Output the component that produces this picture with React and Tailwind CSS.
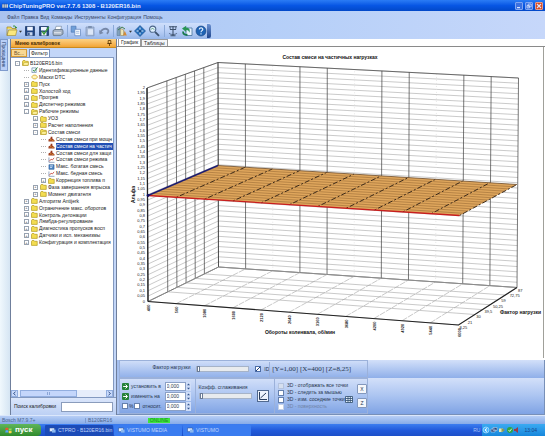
import React, { useState } from "react";

// data ---------------------------------------------------------------------------------------------------------
const TREE = [
  { level: 0, icon: "open", box: "-", label: "B120ER16.bin" },
  { level: 1, icon: "edit", label: "Идентификационные данные" },
  { level: 1, icon: "mask", label: "Маски DTC" },
  { level: 1, icon: "folder", box: "+", label: "Пуск" },
  { level: 1, icon: "folder", box: "+", label: "Холостой ход" },
  { level: 1, icon: "folder", box: "+", label: "Прогрев" },
  { level: 1, icon: "folder", box: "+", label: "Диспетчер режимов" },
  { level: 1, icon: "open", box: "-", label: "Рабочие режимы" },
  { level: 2, icon: "folder", box: "+", label: "УОЗ" },
  { level: 2, icon: "folder", box: "+", label: "Расчет наполнения" },
  { level: 2, icon: "open", box: "-", label: "Состав смеси" },
  { level: 3, icon: "map", label: "Состав смеси при мощн" },
  { level: 3, icon: "map", label: "Состав смеси на частич" },
  { level: 3, icon: "map", label: "Состав смеси для защи" },
  { level: 3, icon: "curve", label: "Состав смеси режима" },
  { level: 3, icon: "value", label: "Макс. богатая смесь" },
  { level: 3, icon: "curve", label: "Макс. бедная смесь" },
  { level: 3, icon: "folder", box: "+", label: "Коррекция топлива п" },
  { level: 2, icon: "folder", box: "+", label: "Фаза завершения впрыска" },
  { level: 2, icon: "folder", box: "+", label: "Момент двигателя" },
  { level: 1, icon: "folder", box: "+", label: "Алгоритм Antijerk" },
  { level: 1, icon: "folder", box: "+", label: "Ограничение макс. оборотов" },
  { level: 1, icon: "folder", box: "+", label: "Контроль детонации" },
  { level: 1, icon: "folder", box: "+", label: "Лямбда-регулирование" },
  { level: 1, icon: "folder", box: "+", label: "Диагностика пропусков восп" },
  { level: 1, icon: "folder", box: "+", label: "Датчики и исп. механизмы" },
  { level: 1, icon: "folder", box: "+", label: "Конфигурация и комплектация" },
];

const INDENT = ["pl-1", "pl-[13px]", "pl-[22px]", "pl-[30px]"];
const MENU = ["Файл", "Правка", "Вид", "Команды", "Инструменты", "Конфигурация", "Помощь"];
const RPM = ["400", "560", "1080", "1600", "2120", "2640", "3160", "3680", "4200", "4920", "5440", "6000"];
const LOADS = ["8,25", "21", "30", "39,5", "50,25", "59", "72,75", "87"];

// icons --------------------------------------------------------------------------------------------------------
function TreeIcon({ type }) {
  if (type === "folder" || type === "open") {
    return (
      <svg viewBox="0 0 8 7" className="h-[6px] w-[7px] shrink-0">
        <path d="M.5 1.5 1.2.6h2.2l.7.9h3.1v4.8H.5z" fill="#f3dc50" stroke="#a88d12" strokeWidth=".7" />
        {type === "open" && <path d="M1 6.2 2.4 3h5.3L6.8 6.2z" fill="#fff3a0" stroke="#a88d12" strokeWidth=".5" />}
      </svg>
    );
  } else if (type === "edit") {
    return (
      <svg viewBox="0 0 8 7" className="h-[6px] w-[7px] shrink-0">
        <path d="M1 1h5v5.5H1z" fill="#eef6ff" stroke="#557799" strokeWidth=".7" />
        <path d="m2.5 3.5 1.3 1.6L7.5.5" fill="none" stroke="#28852c" strokeWidth="1.1" />
      </svg>
    );
  } else if (type === "mask") {
    return (
      <svg viewBox="0 0 8 7" className="h-[6px] w-[7px] shrink-0">
        <path d="m.6 3.5 2-2.2h3l2 2.2-2 2.2h-3z" fill="#fff6c0" stroke="#d5a624" strokeWidth=".9" />
      </svg>
    );
  } else if (type === "map") {
    return (
      <svg viewBox="0 0 8 7" className="h-[6px] w-[7px] shrink-0">
        <path d="M.5 6.5V4L3 2.6V1h2v2l2.5 2v1.5z" fill="#9c3b1d" />
        <path d="m2 5 1.5-1L5 5.5 6.5 5" fill="none" stroke="#f0b040" strokeWidth=".8" />
      </svg>
    );
  } else if (type === "value") {
    return (
      <svg viewBox="0 0 8 7" className="h-[6px] w-[7px] shrink-0">
        <path d="M1 .8h6v5.4H1z" fill="#4d86c6" stroke="#24558f" strokeWidth=".6" />
        <path d="M2.3 2.2h3.4M2.3 4h2.4" stroke="#fff" strokeWidth=".8" />
      </svg>
    );
  } else {
    return (
      <svg viewBox="0 0 8 7" className="h-[6px] w-[7px] shrink-0">
        <path d="M1 .5v5.7h6.5" fill="none" stroke="#56719a" strokeWidth=".7" />
        <path d="m1.5 5 2-2.5 1.5 1L7 1" fill="none" stroke="#c0392b" strokeWidth=".9" />
      </svg>
    );
  }
}

const TOOL_ICONS = {
  Открыть: (
    <>
      <path d="M1 4V2h4l1 1.5h4V5" fill="#f4dc62" stroke="#9d8524" strokeWidth=".7" />
      <path d="M1 10.5 2.6 5H11l-1.4 5.5z" fill="#fae77d" stroke="#9d8524" strokeWidth=".6" />
      <path d="M1 4v6.5" stroke="#9d8524" strokeWidth=".7" />
      <path d="M7 1.2c1.5-.8 3 0 3 1.8l1-.8M10 3 8.8 2" fill="none" stroke="#2b8a30" strokeWidth=".9" />
    </>
  ),
  Сохранить: (
    <>
      <path d="M1.5 1.5h9v9h-9z" fill="#1e4382" stroke="#15305f" strokeWidth=".7" />
      <path d="M3.2 1.8h5.6v3.7H3.2z" fill="#eef4fe" />
      <path d="M3.5 7.2h5v3.3h-5z" fill="#c7d6ee" />
      <path d="M4.2 7.8h1.4v2.4H4.2z" fill="#1e4382" />
    </>
  ),
  Проверить: (
    <>
      <path d="M1.5 1.5h9v9h-9z" fill="#24497f" stroke="#15305f" strokeWidth=".7" />
      <path d="M3 2h5.8v3.5H3zM3.5 7h5v3.5h-5z" fill="#f0f5ff" />
      <path d="M4 6.2 6 9l4.8-7" fill="none" stroke="#39973b" strokeWidth="1.4" />
    </>
  ),
  Печать: (
    <>
      <path d="M4 1.3h5.5L8.7 5H3z" fill="#fff" stroke="#667a94" strokeWidth=".6" />
      <path d="m1 5.5 2-1h7.5L11 6v3L8.5 10.6H1.5L1 9z" fill="#a8b5c6" stroke="#566779" strokeWidth=".7" />
      <path d="M2 7.8h7" stroke="#fff" strokeWidth=".8" />
    </>
  ),
  Копировать: (
    <>
      <path d="M1.2 1.2H6v6H1.2z" fill="#6f9fd9" stroke="#4f79b5" strokeWidth=".7" />
      <path d="M4.8 4.3h5.7v6.4H4.8z" fill="#f8fbff" stroke="#5d83bb" strokeWidth=".7" />
      <path d="M6 6.4h3.3M6 8.2h3.3" stroke="#7a9aca" strokeWidth=".6" />
    </>
  ),
  Вставить: (
    <>
      <path d="M2 2h8v8.8H2z" fill="#a9bbd8" stroke="#7d93b7" strokeWidth=".7" />
      <path d="M4.2 1h3.6v2H4.2z" fill="#7a8fae" />
      <path d="M4 4.2h5v5.5H4z" fill="#dce7f8" />
    </>
  ),
  Отменить: (
    <>
      <path d="M2.2 8C3.2 4 7.6 2.8 9.8 4.6c1.2 1.3.4 3.2-1 4.2" fill="none" stroke="#7688a8" strokeWidth="1.8" />
      <path d="m1.2 5 .4 4.6 4-1.6z" fill="#7688a8" />
    </>
  ),
  Калибровки: (
    <>
      <path d="M1 10.5V3l3-1.8V10.5z" fill="#82a2bd" stroke="#5a7591" strokeWidth=".5" />
      <path d="M4.6 10.5V3.6l3 1.2v5.7z" fill="#eee8bc" stroke="#907b3a" strokeWidth=".5" />
      <path d="m7 10.5 1.8-4.8 2 4.8z" fill="#d48a35" />
      <path d="m2 5 4-3 3 2" fill="none" stroke="#467f4c" />
    </>
  ),
  Навигация: (
    <>
      <path d="m6 .5 5.5 5.5L6 11.5.5 6z" fill="#2670bd" stroke="#174b88" strokeWidth=".6" />
      <path d="M6 2.6v6.8M2.6 6h6.8" stroke="#dcefff" />
      <circle cx="6" cy="6" r="1.5" fill="#174b88" />
    </>
  ),
  Поиск: (
    <>
      <circle cx="4.7" cy="4.2" r="3.1" fill="#dff0ff" stroke="#4a6588" strokeWidth="1.1" />
      <path d="m7 6.8 4 4" stroke="#3f5573" strokeWidth="1.9" />
      <path d="M3 4.7 4.5 3l1.7 1.8" fill="none" stroke="#3f8957" strokeWidth=".7" />
    </>
  ),
  Связь: (
    <>
      <path d="M2 1.8h8M3 4.5h6M6 1v10M3.5 10.8h5" fill="none" stroke="#3e526d" strokeWidth="1.1" />
      <path d="M3.2 1.8v2.5M8.8 1.8v2.5M2 8c1 2 7 2 8 0" fill="none" stroke="#3e526d" strokeWidth=".8" />
    </>
  ),
  Обновить: (
    <>
      <path d="M5 3h6v7.5H5z" fill="#e8f3ff" stroke="#44719c" strokeWidth=".8" />
      <path d="M1 3.6 5.2.8v2c4 0 3.6 2.4 3.4 5C7.6 5.6 7 5 5.2 5v1.9z" fill="#299556" />
      <path d="M2 6.5C2 9 4 10.3 6.5 9.6" fill="none" stroke="#18794c" strokeWidth="1.8" />
    </>
  ),
  Справка: (
    <>
      <circle cx="6" cy="6" r="5" fill="#1e63b5" stroke="#12407a" strokeWidth=".6" />
      <path d="M4.3 4.5c0-2.4 3.8-2 3.5 0C7.5 5.6 6 5.7 6 7.2M6 8.3v1.1" fill="none" stroke="#e9f5ff" strokeWidth="1.1" />
    </>
  ),
};

function ToolButton({ name }) {
  return (
    <button type="button" aria-label={name} className="h-3 w-3 shrink-0">
      <svg viewBox="0 0 12 12" className="size-full">
        {TOOL_ICONS[name]}
      </svg>
    </button>
  );
}

function DropArrow() {
  return (
    <svg viewBox="0 0 4 4" className="ml-[1px] size-[3px] shrink-0">
      <path d="M0 1h4L2 3.5z" fill="#333" />
    </svg>
  );
}

// top bars -----------------------------------------------------------------------------------------------------
function TitleBar() {
  return (
    <header className="flex h-[11px] items-center bg-linear-to-b from-[#2b7cf5] via-[#0756e4] to-[#0248c8] pr-[2px] pl-[2px]">
      <svg viewBox="0 0 7 6" className="mr-[1px] h-[6px] w-[6px]">
        <path d="M0 1h7v4H0z" fill="#c9d6e6" />
        <path d="M1 0v6M3 0v6M5 0v6" stroke="#384a66" strokeWidth=".6" />
      </svg>
      <h1 className="flex-1 font-['Liberation_Sans'] text-[6px] leading-none font-bold whitespace-nowrap text-[#e4eeff]">
        ChipTuningPRO ver.7.7.6 1308 - B120ER16.bin
      </h1>
      <div className="flex gap-[2px] text-[#dbe6ff]">
        <button type="button" aria-label="Свернуть" className="size-2 rounded-[1px] border border-[#7fa5f2] bg-[#3c70e0]">
          <svg viewBox="0 0 6 6"><path d="M1 4.6h3" stroke="currentColor" strokeWidth="1.2" /></svg>
        </button>
        <button type="button" aria-label="Развернуть" className="size-2 rounded-[1px] border border-[#7fa5f2] bg-[#3c70e0]">
          <svg viewBox="0 0 6 6"><path d="M2.2 1h3v2.8h-3zM1 2.5h2.5v2.4H1z" fill="none" stroke="currentColor" strokeWidth=".7" /></svg>
        </button>
        <button type="button" aria-label="Закрыть" className="size-2 rounded-[1px] border border-[#e89a85] bg-[#d64a24]">
          <svg viewBox="0 0 6 6"><path d="m1 1 4 4m0-4L1 5" stroke="currentColor" strokeWidth="1.1" /></svg>
        </button>
      </div>
    </header>
  );
}

function Toolbar() {
  return (
    <div className="bg-linear-to-r from-[#a9c3f0] via-[#b5cff8] to-[#c6d7fa]">
      <nav className="flex h-3 items-center gap-[2px] pt-[1px] pl-[7px] text-[5px] text-[#34435f]">
        {MENU.map((item) => (
          <button type="button" key={item}>{item}</button>
        ))}
      </nav>
      <div className="flex h-4 w-[211px] items-center rounded-r-[2px] bg-linear-to-b from-[#cfdffb] via-[#b9cff6] to-[#97b6e8] pl-[6px]">
        <ToolButton name="Открыть" />
        <DropArrow />
        <div className="ml-[2px] flex gap-[2px]">
          <ToolButton name="Сохранить" />
          <ToolButton name="Проверить" />
          <ToolButton name="Печать" />
        </div>
        <div className="ml-[3px] flex gap-[2px] border-l border-[#8ba9d8] pl-[2px]">
          <ToolButton name="Копировать" />
          <ToolButton name="Вставить" />
          <ToolButton name="Отменить" />
        </div>
        <div className="ml-[3px] flex items-center border-l border-[#8ba9d8] pl-[2px]">
          <ToolButton name="Калибровки" />
          <DropArrow />
        </div>
        <div className="ml-[2px] flex gap-[2px]">
          <ToolButton name="Навигация" />
          <ToolButton name="Поиск" />
        </div>
        <div className="ml-1 flex gap-[2px] border-l border-[#8ba9d8] pl-[2px]">
          <ToolButton name="Связь" />
          <ToolButton name="Обновить" />
          <ToolButton name="Справка" />
        </div>
        <div className="ml-auto h-[14px] w-1 rounded-r-[2px] bg-linear-to-b from-[#6d93d3] to-[#20478f]" />
      </div>
    </div>
  );
}

// left panel ---------------------------------------------------------------------------------------------------
function TreeRow({ node, selected, onSelect }) {
  return (
    <li className={`flex min-h-0 items-center overflow-hidden ${INDENT[node.level]}`}>
      {node.box ? (
        <span className="flex size-[5px] shrink-0 items-center justify-center border border-[#98a2b0] text-[4px] leading-none text-[#333]">
          {node.box}
        </span>
      ) : (
        <span className="w-[5px] shrink-0 border-t border-dotted border-[#b0b0b0]" />
      )}
      <span className="ml-[2px] flex shrink-0">
        <TreeIcon type={node.icon} />
      </span>
      <button
        type="button"
        onClick={onSelect}
        className={`ml-[1px] h-full text-left text-[5px] leading-[7px] whitespace-nowrap ${
          selected ? "flex-1 bg-[#2350b4] text-white" : "text-[#1c1c1c]"
        }`}
      >
        {node.label}
      </button>
    </li>
  );
}

function CalibrationPanel() {
  const [selected, setSelected] = useState(12);

  return (
    <aside className="flex w-[107px] shrink-0 flex-col border-x border-[#6f7f9c] bg-[#c3d6f8]">
      <div className="flex h-[9px] items-center justify-between border-b border-[#c98a20] bg-linear-to-b from-[#fcd284] to-[#f2a431] px-1">
        <h2 className="text-[5px] leading-none font-bold text-[#4a2c00]">Меню калибровок</h2>
        <svg viewBox="0 0 5 6" className="h-[6px] w-[5px]">
          <path d="M1.2.5h2.6v3H1.2zM.3 3.5h4.4M2.5 3.5V6" fill="none" stroke="#5b3500" strokeWidth=".8" />
        </svg>
      </div>
      <div className="flex h-[9px] items-end text-[5px] leading-none">
        <button type="button" className="h-2 w-4 border border-[#d69b35] bg-[#f9d893] text-[#6b512a]">Вс...</button>
        <button type="button" className="ml-[2px] h-2 border border-b-0 border-[#7890bb] bg-white px-[1px]">Фильтр</button>
      </div>
      <div className="mr-[2px] flex flex-1 flex-col justify-between border-t border-r border-[#8399c0] bg-white pt-[2px]">
        <ul className="grid h-[186px] auto-rows-fr">
          {TREE.map((node, index) => (
            <TreeRow key={node.label} node={node} selected={index === selected} onSelect={() => setSelected(index)} />
          ))}
        </ul>
        <div className="flex h-[7px] items-center justify-between bg-[#e6edfb] text-[#36558c]">
          <button type="button" aria-label="Влево" className="size-[7px] border border-[#92aedf] bg-[#c8d9fa]">
            <svg viewBox="0 0 5 5"><path d="M3.5.8 1.5 2.5l2 1.7" fill="none" stroke="currentColor" /></svg>
          </button>
          <div className="mr-auto ml-[2px] flex h-[7px] w-[57px] items-center justify-center border border-[#92aedf] bg-[#c4d6fb]">
            <span className="h-[3px] w-[3px] border-x border-[#8aa5d6]" />
          </div>
          <button type="button" aria-label="Вправо" className="size-[7px] border border-[#92aedf] bg-[#c8d9fa]">
            <svg viewBox="0 0 5 5"><path d="m1.5.8 2 1.7-2 1.7" fill="none" stroke="currentColor" /></svg>
          </button>
        </div>
      </div>
      <div className="flex h-[18px] items-center justify-between border-t border-[#8399c0] bg-linear-to-b from-[#dbe6fb] to-[#bcd0f4] pr-[3px] pl-[3px] text-[5px]">
        <label htmlFor="search" className="whitespace-nowrap">Поиск калибровки</label>
        <input id="search" className="h-[10px] w-[52px] border border-[#8a9cbc] bg-white px-[2px]" />
      </div>
    </aside>
  );
}

// chart --------------------------------------------------------------------------------------------------------
const lerp = (a, b, t) => a + (b - a) * t;
const along = (p, q, t) => [lerp(p[0], q[0], t), lerp(p[1], q[1], t)];

// corners of the box: front-left, back-left, back-right, front-right
const TOP = [[147, 88], [218, 62.5], [518.5, 78]];
const FLOOR = [[148, 301.5], [218.5, 267], [517, 287.5], [458.5, 325]];
const PLANE = [[148, 195.5], [218, 165.5], [517, 184.5], [459.5, 215.5]];
const DEPTH = [0, 0.28, 0.41, 0.54, 0.67, 0.8, 1];

function Line({ from, to, ...rest }) {
  return <line x1={from[0]} y1={from[1]} x2={to[0]} y2={to[1]} {...rest} />;
}

function Chart() {
  const levels = Array.from({ length: 41 }, (_, i) => i);
  const columns = Array.from({ length: 12 }, (_, i) => i / 11);

  return (
    <svg
      viewBox="118 47 425 311"
      preserveAspectRatio="none"
      className="block w-full font-['Liberation_Sans']"
      role="img"
      aria-label="Состав смеси на частичных нагрузках"
    >
      {/* walls */}
      <g stroke="#a6a6a6" strokeWidth=".6" fill="none">
        {levels.map((i) => {
          const points = [0, 1, 2].map((c) => along(FLOOR[c], TOP[c], i / 40).join(",")).join(" ");
          return <polyline key={i} points={points} />;
        })}
      </g>
      <g stroke="#3d3d3d" strokeWidth=".7">
        {DEPTH.map((t) => (
          <Line key={t} from={along(FLOOR[0], FLOOR[1], t)} to={along(TOP[0], TOP[1], t)} />
        ))}
        {columns.map((t, i) =>
          [2, 5, 8].includes(i) ? (
            <Line key={t} from={along(FLOOR[1], FLOOR[2], t)} to={along(TOP[1], TOP[2], t)} stroke="#dedede" strokeDasharray="1 2" />
          ) : (
            <Line key={t} from={along(FLOOR[1], FLOOR[2], t)} to={along(TOP[1], TOP[2], t)} />
          )
        )}
        <polyline points={TOP.join(" ")} fill="none" />
        <polyline points={FLOOR.slice(0, 3).join(" ")} fill="none" />
      </g>

      {/* floor */}
      <g stroke="#a5a5a5" strokeWidth=".6">
        {columns.map((t) => (
          <Line key={t} from={along(FLOOR[0], FLOOR[3], t)} to={along(FLOOR[1], FLOOR[2], t)} strokeDasharray="6 1" />
        ))}
        {DEPTH.map((t) => (
          <Line key={t} from={along(FLOOR[0], FLOOR[1], t)} to={along(FLOOR[3], FLOOR[2], t)} />
        ))}
      </g>
      <polyline points={[FLOOR[0], FLOOR[3], FLOOR[2]].join(" ")} fill="none" stroke="#222" strokeWidth="1.1" />
      <Line from={TOP[0]} to={FLOOR[0]} stroke="#222" strokeWidth="1.3" />

      {/* surface */}
      <polygon points={PLANE.join(" ")} fill="#dfa65c" />
      <g stroke="#9a6b36" strokeWidth=".6">
        {Array.from({ length: 13 }, (_, i) => (i + 1) / 14).map((t) => (
          <Line key={t} from={along(PLANE[0], PLANE[1], t)} to={along(PLANE[3], PLANE[2], t)} />
        ))}
      </g>
      {columns.slice(1).map((t) => (
        <Line
          key={t}
          from={along(PLANE[0], PLANE[3], t)}
          to={along(PLANE[1], PLANE[2], t)}
          stroke="#2b1d12"
          strokeWidth=".9"
          strokeDasharray="2 2 5 2"
        />
      ))}
      <Line from={PLANE[1]} to={PLANE[2]} stroke="#6b4a2a" strokeWidth=".8" />
      <Line from={PLANE[0]} to={PLANE[3]} stroke="#c81e1e" strokeWidth="1.3" />
      <Line from={PLANE[0]} to={PLANE[1]} stroke="#1c1c70" strokeWidth="1.4" />
      <circle cx="148" cy="195.5" r="1.4" fill="#111166" />

      {/* labels */}
      <g fontSize="4" fill="#222" textAnchor="end">
        {levels.map((i) => (
          <text key={i} x="145" y={along(FLOOR[0], TOP[0], i / 40)[1] + 1}>
            {String(i / 20).replace(".", ",")}
          </text>
        ))}
        {RPM.map((rpm, i) => {
          const [x, y] = along(FLOOR[0], FLOOR[3], i / 11);
          return (
            <text key={rpm} transform={`translate(${x + 2} ${y + 3}) rotate(-90)`} fontWeight="bold">
              {rpm}
            </text>
          );
        })}
      </g>
      <g fontSize="4" fill="#222">
        {LOADS.map((load, i) => {
          const [x, y] = along(FLOOR[3], FLOOR[2], i / 7);
          return <text key={load} x={x + 1} y={y + 4}>{load}</text>;
        })}
      </g>
      <g fontSize="5" fontWeight="bold" fill="#111">
        <text x="330" y="59" textAnchor="middle">Состав смеси на частичных нагрузках</text>
        <text x="300" y="334" textAnchor="middle">Обороты коленвала, об/мин</text>
        <text x="500" y="314">Фактор нагрузки</text>
        <text transform="translate(135 203) rotate(-90)">Альфа</text>
      </g>
    </svg>
  );
}

// controls under the chart -------------------------------------------------------------------------------------
function NumberRow({ id, label, children }) {
  return (
    <div className="flex h-[10px] items-center">
      {children}
      <label htmlFor={id} className="ml-[2px] flex-1 whitespace-nowrap">{label}</label>
      <input id={id} defaultValue="0,000" className="h-[9px] w-[21px] shrink-0 border border-[#8ba0c6] bg-white px-[1px] text-[5px]" />
      <svg viewBox="0 0 5 9" className="h-[9px] w-[5px] shrink-0 bg-[#cfddf8]">
        <path d="M1 3.3 2.5 1.5 4 3.3zM1 5.7l1.5 1.8L4 5.7z" fill="#34568f" />
      </svg>
    </div>
  );
}

function GreenArrow() {
  return (
    <svg viewBox="0 0 7 7" className="size-[7px] shrink-0">
      <rect width="7" height="7" rx="1" fill="#26823a" />
      <path d="M1.2 3.5h4M3.5 1.5l2 2-2 2" fill="none" stroke="#fff" />
    </svg>
  );
}

function Tick({ id, label, checked, disabled }) {
  return (
    <div className={`flex h-[7px] items-center gap-[3px] ${disabled ? "text-[#6f83a8]" : "text-[#27364f]"}`}>
      <input
        id={id}
        type="checkbox"
        defaultChecked={checked}
        disabled={disabled}
        className="size-[6px] shrink-0 appearance-none border border-[#6580ad] bg-white checked:border-[#b4c3de] checked:bg-[#d5dfef] disabled:border-[#c4d1e8]"
      />
      <label htmlFor={id} className="whitespace-nowrap">{label}</label>
    </div>
  );
}

function Slider({ label }) {
  return (
    <input
      type="range"
      aria-label={label}
      defaultValue="0"
      className="h-[6px] w-[53px] appearance-none border border-[#a6b3c8] bg-[#e8ebee] [&::-webkit-slider-thumb]:h-[6px] [&::-webkit-slider-thumb]:w-[3px] [&::-webkit-slider-thumb]:appearance-none [&::-webkit-slider-thumb]:border [&::-webkit-slider-thumb]:border-[#6a7b96] [&::-webkit-slider-thumb]:bg-white"
    />
  );
}

function Controls() {
  return (
    <section className="mt-auto flex flex-col border-r border-b border-[#7890b8] bg-[#a6c0ef] pl-[2px] text-[5px] leading-none text-[#27364f]">
      <div className="bg-linear-to-b from-[#d3e0f9] to-[#8fafe9]">
        <div className="flex h-[18px] w-[249px] items-center border border-[#9bb1da]">
          <span className="w-[73px] pb-1 text-right">Фактор нагрузки</span>
          <span className="ml-[6px] flex">
            <Slider label="Фактор нагрузки" />
          </span>
          <input
            id="axis"
            type="checkbox"
            defaultChecked
            className="ml-[6px] size-[6px] appearance-none border border-[#4c6da6] bg-white bg-linear-to-br from-white from-40% via-[#1f3f7d] to-white to-60%"
          />
          <label htmlFor="axis" className="ml-[3px]">ID</label>
          <output className="ml-auto border-l border-[#9bb1da] py-1 pr-4 pl-[2px] font-['Liberation_Serif'] text-[7px] whitespace-nowrap">
            [Y=1,00] [X=400] [Z=8,25]
          </output>
        </div>
      </div>
      <div className="bg-linear-to-b from-[#d3e0f9] via-[#abc4f1] to-[#7fa3e4]">
        <div className="flex h-9 w-[249px] border border-[#9bb1da]">
          <div className="flex w-[75px] flex-col justify-center pr-1 pl-[2px]">
            <NumberRow id="set" label="установить в"><GreenArrow /></NumberRow>
            <NumberRow id="change" label="изменить на"><GreenArrow /></NumberRow>
            <NumberRow id="relative" label="относит.">
              <input type="checkbox" id="percent" className="size-[6px] shrink-0 appearance-none border border-[#6580ad] bg-white" />
              <label htmlFor="percent" className="px-[1px]">%</label>
              <input type="checkbox" aria-label="относит." className="size-[6px] shrink-0 appearance-none border border-[#6580ad] bg-white" />
            </NumberRow>
          </div>
          <div className="flex w-20 items-start justify-between border-l border-[#9bb1da] pr-[5px] pl-[3px]">
            <div className="flex w-[53px] flex-col gap-[3px] pt-[6px]">
              <span className="whitespace-nowrap">Коэфф. сглаживания</span>
              <Slider label="Коэфф. сглаживания" />
            </div>
            <button type="button" aria-label="Сгладить" className="mt-[11px] size-3 border border-[#51698f] bg-[#eef3fc]">
              <svg viewBox="0 0 10 10">
                <path d="M1.5 1v7.5H9M2.5 7 8 2" fill="none" stroke="#2b3f60" />
              </svg>
            </button>
          </div>
          <div className="flex w-20 flex-col justify-center border-l border-[#9bb1da] pl-[3px]">
            <Tick id="all" label="3D - отображать все точки" checked />
            <Tick id="mouse" label="3D - следить за мышью" />
            <div className="flex items-center justify-between pr-[2px]">
              <Tick id="neighbours" label="3D - изм. соседние точки" />
              <svg viewBox="0 0 8 7" className="h-[7px] w-2 shrink-0">
                <path d="M.5.5h7v6h-7zM.5 2.5h7M.5 4.5h7M3 .5v6M5.3.5v6" fill="#e8f2ff" stroke="#2d4d6d" strokeWidth=".8" />
              </svg>
            </div>
            <Tick id="surface" label="3D - поверхность" disabled />
          </div>
          <div className="flex flex-col justify-center gap-1 pl-[3px]">
            <button type="button" className="h-[10px] w-[10px] rounded-[1px] border border-[#8398bd] bg-[#f5f7fb]">X</button>
            <button type="button" className="h-[10px] w-[10px] rounded-[1px] border border-[#8398bd] bg-[#f5f7fb]">Z</button>
          </div>
        </div>
      </div>
    </section>
  );
}

// taskbar ------------------------------------------------------------------------------------------------------
function TaskButton({ label, active }) {
  return (
    <button
      type="button"
      className={`flex h-[11px] w-[68px] items-center gap-[2px] rounded-[1px] pl-1 text-[5px] text-[#c3d6fb] ${
        active ? "bg-[#1b4bb8]" : "bg-[#3a7cf0]"
      }`}
    >
      <svg viewBox="0 0 7 6" className="h-[6px] w-[7px] shrink-0">
        <path d="M.5 1h5v3.6h-5z" fill="#dbe9ff" stroke="#234a8c" strokeWidth=".5" />
        <path d="M3 2.6h3.6V5.6H3z" fill="#8ab7ef" />
      </svg>
      <span className="whitespace-nowrap">{label}</span>
    </button>
  );
}

function Taskbar() {
  return (
    <footer className="flex h-3 items-center bg-linear-to-b from-[#3c7df0] via-[#225bdc] to-[#1c4fc9]">
      <button
        type="button"
        className="flex h-3 w-[41px] items-center gap-[3px] rounded-r-[4px] bg-linear-to-b from-[#5fb65a] to-[#2f8a2c] pl-[5px] text-[8px] leading-none font-bold text-white"
      >
        <svg viewBox="0 0 8 8" className="size-[7px]">
          <path d="M.5 1.2C2 .5 3 .7 3.8 1.2v2.5C3 3.2 2 3 .5 3.7z" fill="#ee5430" />
          <path d="M4.3 1.3c1 .5 2 .5 3.2 0v2.5c-1.2.5-2.2.5-3.2 0z" fill="#8fdc58" />
          <path d="M.5 4.2C2 3.5 3 3.7 3.8 4.2v2.5C3 6.2 2 6 .5 6.7z" fill="#59a2ff" />
          <path d="M4.3 4.3c1 .5 2 .5 3.2 0v2.5c-1.2.5-2.2.5-3.2 0z" fill="#fbd648" />
        </svg>
        пуск
      </button>
      <div className="ml-1 flex gap-[1px]">
        <TaskButton label="CTPRO - B120ER16.bin" active />
        <TaskButton label="VISTUMO MEDIA" />
        <TaskButton label="VISTUMO" />
      </div>
      <span className="mr-[2px] ml-auto text-[5px] text-[#a9c2f5]">RU</span>
      <div className="flex h-3 items-center bg-linear-to-b from-[#3aaaf2] to-[#1587dc] pr-2 text-[5px] text-[#16448a]">
        <svg viewBox="0 0 38 8" className="h-2 w-[38px]">
          <circle cx="4" cy="4" r="3" fill="#47b6ff" stroke="#cbeaff" strokeWidth=".6" />
          <path d="m5 2.4-2 1.6 2 1.6" fill="none" stroke="#fff" />
          <path d="M9 3h4v3H9zM11 1.5h4v3h-4z" fill="#28477c" stroke="#cfe2fa" strokeWidth=".5" />
          <path d="M17 2.5h4v3.5h-4z" fill="#e4e8bb" />
          <path d="m19.5 2 3.5 2-3.5 2.5z" fill="#8c9953" />
          <circle cx="28" cy="4" r="3" fill="#2fa543" />
          <path d="m26.5 4 1.2 1.4 2-2.7" fill="none" stroke="#fff" strokeWidth=".8" />
          <path d="M32 3h1.5L36 1v6l-2.5-2H32z" fill="#9a3c4a" />
        </svg>
        <time className="ml-1">13:04</time>
      </div>
    </footer>
  );
}

// START OF COMPONENT *******************************************************************************************
const App = () => {
  const [tab, setTab] = useState("График");

  return (
    <div className="flex min-h-screen flex-col bg-[#d9e6fa] font-['Liberation_Sans',sans-serif] text-[5px] leading-none text-[#1c1c1c]">
      <TitleBar />
      <Toolbar />

      <main className="flex flex-1">
        <div className="w-[10px] shrink-0 bg-linear-to-r from-[#f0f8fd] to-[#d5e5f3]">
          <button
            type="button"
            className="h-8 w-2 border border-[#7f9bcd] bg-[#b8cff7] text-[5px] leading-[6px] whitespace-nowrap text-[#243c6c] [writing-mode:vertical-rl]"
          >
            Проводник
          </button>
        </div>
        <CalibrationPanel />
        <div className="flex min-w-0 flex-1 flex-col bg-white">
          <div className="flex h-2 shrink-0 items-end border-b border-[#8a8a8a] pl-[1px]">
            {["График", "Таблицы"].map((name) => (
              <button
                type="button"
                key={name}
                onClick={() => setTab(name)}
                className={`h-[7px] border-x border-[#9a9a9a] px-[2px] text-[5px] ${
                  tab === name ? "bg-white" : "border-t bg-[#f4f5f8]"
                }`}
              >
                {name}
              </button>
            ))}
          </div>
          <div className="mr-[1px] border-r border-[#a0a09a] pl-[1px]">
            <Chart />
          </div>
          <Controls />
        </div>
      </main>

      <div className="flex h-[9px] items-center border-t border-[#dbe7fb] bg-linear-to-b from-[#b7cef5] to-[#86abe8] text-[5px] text-[#4d668f]">
        <span className="w-[85px] pl-[2px]">Bosch M7.9.7+</span>
        <span className="w-[63px] border-l border-[#7b9bd1] pl-[2px]">B120ER16</span>
        <span className="h-[5px] w-[22px] bg-[#3ee63c] text-center leading-[5px] text-[#1b8a24]">ONLINE</span>
      </div>
      <Taskbar />
    </div>
  );
};

export default App;
